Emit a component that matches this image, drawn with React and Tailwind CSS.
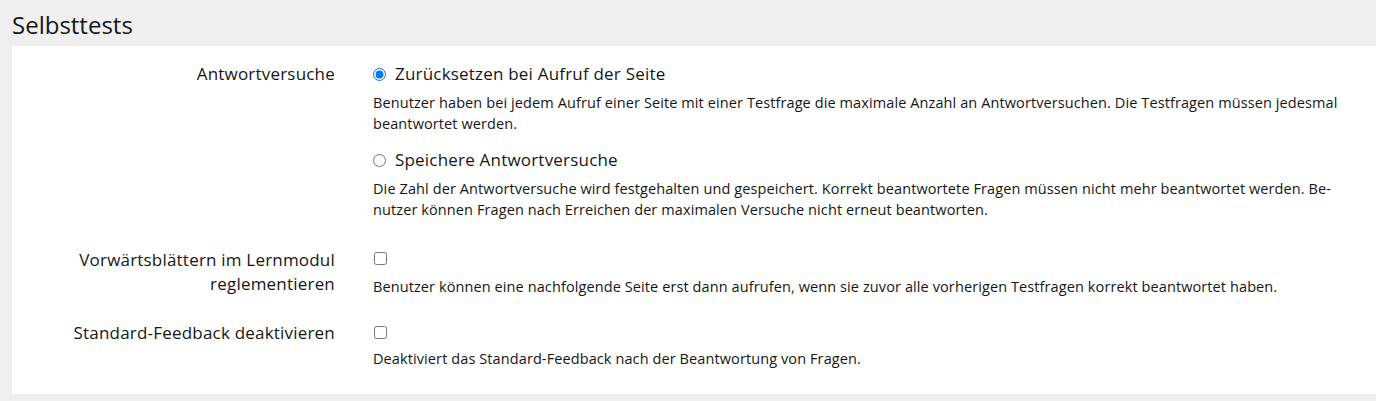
import React from "react";

const font = { fontFamily: '"Open Sans", "Noto Sans", sans-serif' };

function Row({ label, children, className = "" }) {
  return (
    <div className={"flex " + className}>
      <div className="w-[323px] shrink-0 text-right text-[17px] tracking-[0.2px] leading-[24px] text-[#161616]">
        {label}
      </div>
      <div className="flex-1 pl-[38px] pr-[20px]">{children}</div>
    </div>
  );
}

function Desc({ children, className = "" }) {
  return (
    <p className={"text-[14.5px] tracking-[0.1px] leading-[21px] text-[#161616] " + className}>{children}</p>
  );
}

export default function App() {
  return (
    <div style={font} className="w-[1376px] h-[401px] bg-[#efefef] overflow-hidden">
      <div className="h-[46px] pl-[12px] pt-[9px] text-[24px] leading-[32px] text-[#161616]">
        Selbsttests
      </div>
      <div className="ml-[12px] bg-white pt-[16px] pb-[25px] h-[348px]">
        <Row label="Antwortversuche">
          <label className="flex items-center h-[24px] text-[17px] tracking-[0.2px] text-[#161616]">
            <input type="radio" name="a" defaultChecked className="m-0 w-[13px] h-[13px]" />
            <span className="ml-[9px]">Zurücksetzen bei Aufruf der Seite</span>
          </label>
          <Desc className="mt-[6px]">
            Benutzer haben bei jedem Aufruf einer Seite mit einer Testfrage die maximale Anzahl an Antwortversuchen. Die Testfragen müssen jedesmal beantwortet werden.
          </Desc>
          <label className="flex items-center h-[24px] mt-[14px] text-[17px] tracking-[0.2px] text-[#161616]">
            <input type="radio" name="a" className="m-0 w-[13px] h-[13px]" />
            <span className="ml-[9px]">Speichere Antwortversuche</span>
          </label>
          <Desc className="mt-[6px]">
            Die Zahl der Antwortversuche wird festgehalten und gespeichert. Korrekt beantwortete Fragen müssen nicht mehr beantwortet werden. Be&shy;nutzer können Fragen nach Erreichen der maximalen Versuche nicht erneut beantworten.
          </Desc>
        </Row>
        <Row className="mt-[28px]" label={<>Vorwärtsblättern im Lernmodul<br />reglementieren</>}>
          <div className="flex items-center h-[20px]">
            <input type="checkbox" className="m-0 ml-[1px] w-[13px] h-[13px]" />
          </div>
          <Desc className="mt-[8px]">
            Benutzer können eine nachfolgende Seite erst dann aufrufen, wenn sie zuvor alle vorherigen Testfragen korrekt beantwortet haben.
          </Desc>
        </Row>
        <Row className="mt-[24px]" label="Standard-Feedback deaktivieren">
          <div className="flex items-center h-[22px]">
            <input type="checkbox" className="m-0 ml-[1px] w-[13px] h-[13px]" />
          </div>
          <Desc className="mt-[5px]">
            Deaktiviert das Standard-Feedback nach der Beantwortung von Fragen.
          </Desc>
        </Row>
      </div>
    </div>
  );
}
